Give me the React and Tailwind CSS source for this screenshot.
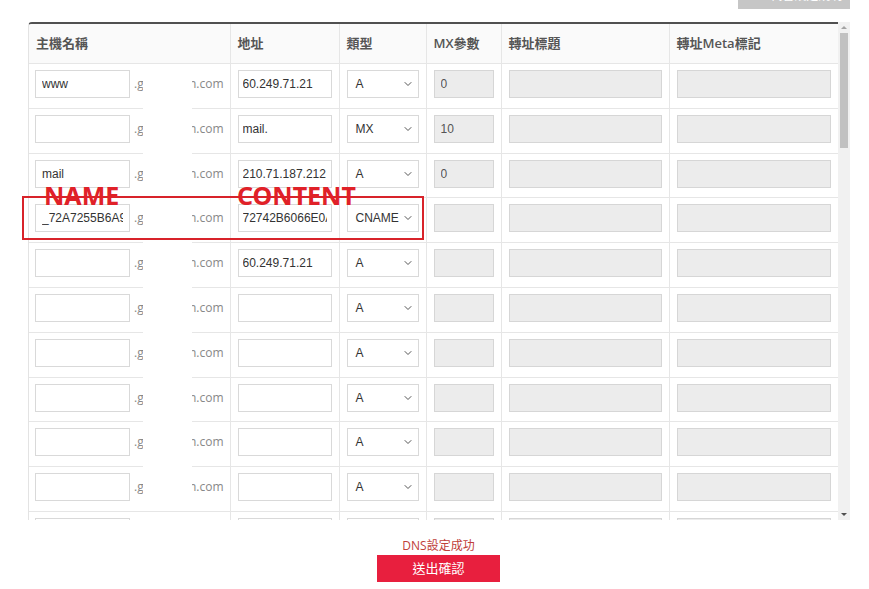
import { ChevronDown } from "lucide-react";

const rows = [
  { host: "www", addr: "60.249.71.21", type: "A", mx: "0" },
  { host: "", addr: "mail.", type: "MX", mx: "10" },
  { host: "mail", addr: "210.71.187.212", type: "A", mx: "0" },
  { host: "_72A7255B6A93", addr: "72742B6066E0A", type: "CNAME", mx: "" },
  { host: "", addr: "60.249.71.21", type: "A", mx: "" },
  { host: "", addr: "", type: "A", mx: "" },
  { host: "", addr: "", type: "A", mx: "" },
  { host: "", addr: "", type: "A", mx: "" },
  { host: "", addr: "", type: "A", mx: "" },
  { host: "", addr: "", type: "A", mx: "" },
  { host: "", addr: "", type: "A", mx: "" },
];

const columns = ["主機名稱", "地址", "類型", "MX參數", "轉址標題", "轉址Meta標記"];
const widths = [201, 109, 87, 75, 168, 169];

const inputCls =
  "h-[28px] border border-[#d9d9d9] bg-white text-[12px] text-[#333] outline-none font-['Liberation_Sans',Arial,sans-serif]";
const grayCls =
  "h-[28px] w-full border border-[#d6d6d6] bg-[#ececec] px-[6px] text-[12px] text-[#555] outline-none font-['Liberation_Sans',Arial,sans-serif]";

export default function App() {
  return (
    <div className="relative w-[869px] h-[589px] overflow-hidden bg-white font-['Open_Sans','Noto_Sans_CJK_TC',sans-serif]">
      {/* top-right button, cut off by the page edge */}
      <div className="flex justify-end pr-[19px]">
        <button className="-mt-[18px] h-[27px] w-[112px] bg-[#c6c6c6] text-[12px] text-white">
          DNS代管設定說明
        </button>
      </div>

      <div className="ml-[28px] mt-[13px] flex h-[498px] w-[822px]">
        <div className="w-[810px] overflow-hidden rounded-tl-[4px] border-t-2 border-l border-[#e3e3e3] border-t-[#505050]">
          <table className="w-[809px] table-fixed border-collapse">
            <colgroup>
              {widths.map((w, i) => (
                <col key={i} style={{ width: w }} />
              ))}
            </colgroup>
            <thead>
              <tr className="bg-[#fafafa]">
                {columns.map((c, i) => (
                  <th
                    key={i}
                    className="h-[39px] border-b border-r border-[#e6e6e6] px-[7px] text-left text-[13px] font-semibold text-[#555]"
                  >
                    {c}
                  </th>
                ))}
              </tr>
            </thead>
            <tbody>
              {rows.map((r, i) => (
                <tr key={i} className={i === 2 || i === 7 ? "h-[44px]" : "h-[45px]"}>
                  <td className="border-b border-r border-[#e6e6e6] px-[6px] align-top pt-[6px]">
                    <div className="flex items-center text-[12px] text-[#888]">
                      <input readOnly value={r.host} className={inputCls + " w-[95px] px-[6px]"} />
                      <span className="ml-[4px]">.g</span>
                      <span className="flex-1" />
                      <span>n.com</span>
                    </div>
                  </td>
                  <td className="border-b border-r border-[#e6e6e6] px-[7px] align-top pt-[6px]">
                    <input readOnly value={r.addr} className={inputCls + " w-full px-[4px]"} />
                  </td>
                  <td className="border-b border-r border-[#e6e6e6] px-[7px] align-top pt-[6px]">
                    <div className="flex h-[28px] items-center justify-between border border-[#d9d9d9] bg-white pl-[8px] pr-[4px] text-[12px] text-[#333] font-['Liberation_Sans',Arial,sans-serif]">
                      <span>{r.type}</span>
                      <ChevronDown size={12} strokeWidth={2} className="text-[#555]" />
                    </div>
                  </td>
                  <td className="border-b border-r border-[#e6e6e6] px-[7px] align-top pt-[6px]">
                    <input readOnly value={r.mx} className={grayCls} />
                  </td>
                  <td className="border-b border-r border-[#e6e6e6] px-[7px] align-top pt-[6px]">
                    <input readOnly value="" className={grayCls} />
                  </td>
                  <td className="border-b border-[#e6e6e6] px-[7px] align-top pt-[6px]">
                    <input readOnly value="" className={grayCls} />
                  </td>
                </tr>
              ))}
            </tbody>
          </table>
        </div>

        {/* scrollbar */}
        <div className="flex w-[12px] flex-col items-center bg-[#f1f1f1]">
          <div className="mt-[4px] h-0 w-0 border-x-[3px] border-b-[3px] border-x-transparent border-b-[#a3a3a3]" />
          <div className="mt-[4px] h-[115px] w-[8px] bg-[#c1c1c1]" />
          <div className="flex-1" />
          <div className="mb-[4px] h-0 w-0 border-x-[3px] border-t-[3px] border-x-transparent border-t-[#505050]" />
        </div>
      </div>

      <div className="mt-[18px] flex flex-col items-center pl-[8px]">
        <div className="h-[16px] text-[12px] leading-[16px] text-[#c0403a]">DNS設定成功</div>
        <button className="mt-[1px] h-[27px] w-[123px] bg-[#e81f3e] text-[13px] text-white">
          送出確認
        </button>
      </div>

      {/* redaction over the domain part */}
      <div className="absolute left-[143px] top-[64px] h-[447px] w-[49px] bg-white" />

      {/* red annotation */}
      <div className="absolute left-[22px] top-[196px] h-[44px] w-[402px] border-2 border-[#d8232a]" />
      <div className="absolute left-[44px] top-[183px] text-[25px] font-bold leading-[25px] text-[#e02128] font-['Noto_Sans',sans-serif]">
        NAME
      </div>
      <div className="absolute left-[237px] top-[183px] text-[25px] font-bold leading-[25px] text-[#e02128] font-['Noto_Sans',sans-serif]">
        CONTENT
      </div>
    </div>
  );
}
